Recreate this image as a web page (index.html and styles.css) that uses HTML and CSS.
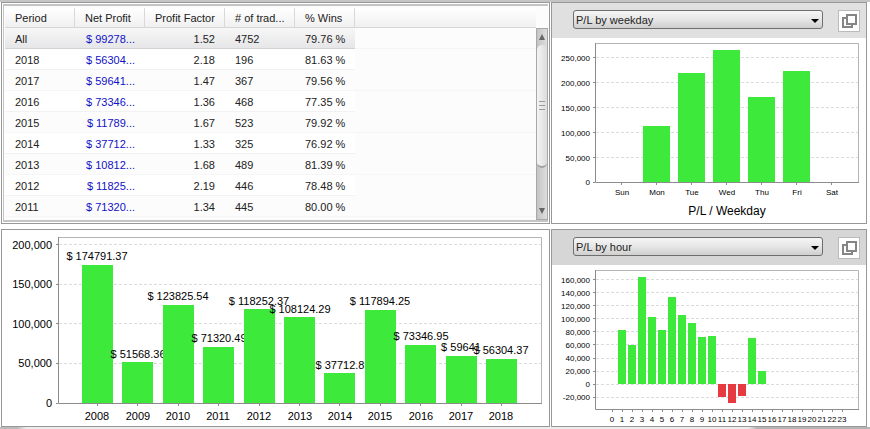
FILE: index.html
```html
<!DOCTYPE html>
<html lang="en">
<head>
    <meta charset="UTF-8">
    <meta name="viewport" content="width=device-width, initial-scale=1.0">
    <title>Strategy statistics</title>
    <link rel="stylesheet" href="styles.css">
</head>
<body>
    <div class="top-strip"></div>
    <main class="dashboard">
        <section class="panel table-panel">
            <div class="table-frame">
                <table class="periods">
                    <colgroup>
                        <col class="col-medium">
                        <col class="col-medium">
                        <col class="col-wide">
                        <col class="col-medium">
                        <col class="col-small">
                        <col>
                    </colgroup>
                    <thead>
                        <tr><th>Period</th><th>Net Profit</th><th>Profit Factor</th><th># of trad...</th><th>% Wins</th><td class="filler"></td></tr>
                    </thead>
                    <tbody>
                        <tr class="selected"><td>All</td><td class="money">$ 99278...</td><td class="num">1.52</td><td>4752</td><td>79.76 %</td><td class="filler"></td></tr>
                        <tr><td>2018</td><td class="money">$ 56304...</td><td class="num">2.18</td><td>196</td><td>81.63 %</td><td class="filler"></td></tr>
                        <tr><td>2017</td><td class="money">$ 59641...</td><td class="num">1.47</td><td>367</td><td>79.56 %</td><td class="filler"></td></tr>
                        <tr><td>2016</td><td class="money">$ 73346...</td><td class="num">1.36</td><td>468</td><td>77.35 %</td><td class="filler"></td></tr>
                        <tr><td>2015</td><td class="money">$ 11789...</td><td class="num">1.67</td><td>523</td><td>79.92 %</td><td class="filler"></td></tr>
                        <tr><td>2014</td><td class="money">$ 37712...</td><td class="num">1.33</td><td>325</td><td>76.92 %</td><td class="filler"></td></tr>
                        <tr><td>2013</td><td class="money">$ 10812...</td><td class="num">1.68</td><td>489</td><td>81.39 %</td><td class="filler"></td></tr>
                        <tr><td>2012</td><td class="money">$ 11825...</td><td class="num">2.19</td><td>446</td><td>78.48 %</td><td class="filler"></td></tr>
                        <tr><td>2011</td><td class="money">$ 71320...</td><td class="num">1.34</td><td>445</td><td>80.00 %</td><td class="filler"></td></tr>
                    </tbody>
                </table>
                <div class="scrollbar">
                    <button type="button" class="scroll-button" aria-label="Scroll up">
                        <svg width="8" height="8" viewBox="0 0 8 8"><path d="M4 1 7 7H1z" fill="#666"/></svg>
                    </button>
                    <div class="scroll-track">
                        <div class="scroll-thumb"><i></i><i></i><i></i></div>
                    </div>
                    <button type="button" class="scroll-button" aria-label="Scroll down">
                        <svg width="8" height="8" viewBox="0 0 8 8"><path d="M1 1H7L4 7z" fill="#666"/></svg>
                    </button>
                </div>
            </div>
        </section>

        <section class="panel">
            <div class="panel-header">
                <div class="select-wrap">
                    <select class="chart-select" aria-label="Weekday chart type">
                        <option>P/L by weekday</option>
                    </select>
                    <svg class="caret" width="8" height="4" viewBox="0 0 8 4"><path d="M0 0H8L4 4z"/></svg>
                </div>
                <button type="button" class="detach-button" aria-label="Open weekday chart in window">
                    <svg width="16" height="16" viewBox="0 0 16 16" fill="#fff" stroke="#858585" stroke-width="2"><path d="M2 5H11V14H2z"/><path d="M6 2H15V11H6z"/></svg>
                </button>
            </div>
            <svg class="chart small-chart" viewBox="0 0 314 185" role="img" aria-label="P/L by weekday">
                <path class="grid" d="M44 19.5H306M44 44.5H306M44 69.5H306M44 94.5H306M44 119.5H306"/>
                <path class="frame" d="M43.5 5.5H306.5V144.5"/>
                <g class="bars">
                    <rect x="91" y="88" width="27" height="56"/>
                    <rect x="126" y="35" width="27" height="109"/>
                    <rect x="161" y="12" width="27" height="132"/>
                    <rect x="196" y="59" width="27" height="85"/>
                    <rect x="231" y="33" width="27" height="111"/>
                </g>
                <path class="axis" d="M43.5 5V144.5H307M41 19.5H43M41 44.5H43M41 69.5H43M41 94.5H43M41 119.5H43M41 144.5H43M69.5 145V147M104.5 145V147M139.5 145V147M174.5 145V147M209.5 145V147M244.5 145V147M279.5 145V147"/>
                <g class="y-labels">
                    <text x="38" y="23">250,000</text>
                    <text x="38" y="48">200,000</text>
                    <text x="38" y="73">150,000</text>
                    <text x="38" y="98">100,000</text>
                    <text x="38" y="123">50,000</text>
                    <text x="38" y="147">0</text>
                </g>
                <g class="x-labels">
                    <text x="70" y="157">Sun</text>
                    <text x="105" y="157">Mon</text>
                    <text x="140" y="157">Tue</text>
                    <text x="175" y="157">Wed</text>
                    <text x="210" y="157">Thu</text>
                    <text x="245" y="157">Fri</text>
                    <text x="280" y="157">Sat</text>
                </g>
                <text class="chart-title" x="175" y="177">P/L / Weekday</text>
            </svg>
        </section>

        <section class="panel">
            <svg class="chart" viewBox="0 0 547 196" role="img" aria-label="Net profit by year">
                <path class="grid" d="M57 14.5H539M57 54.5H539M57 93.5H539M57 133.5H539"/>
                <path class="frame" d="M56.5 7.5H539.5V173.5"/>
                <!-- each label follows its bar, so the next bar can cover it -->
                <g class="bars x-labels">
                    <rect x="80" y="35" width="31" height="138"/><text x="95" y="30">$ 174791.37</text>
                    <rect x="120" y="132" width="31" height="41"/><text x="136" y="128">$ 51568.36</text>
                    <rect x="161" y="75" width="31" height="98"/><text x="176" y="70">$ 123825.54</text>
                    <rect x="201" y="117" width="31" height="56"/><text x="217" y="112">$ 71320.49</text>
                    <rect x="242" y="79" width="31" height="94"/><text x="257" y="75">$ 118252.37</text>
                    <rect x="282" y="87" width="31" height="86"/><text x="298" y="83">$ 108124.29</text>
                    <rect x="322" y="143" width="31" height="30"/><text x="338" y="139">$ 37712.8</text>
                    <rect x="363" y="80" width="31" height="93"/><text x="378" y="75">$ 117894.25</text>
                    <rect x="403" y="115" width="31" height="58"/><text x="419" y="110">$ 73346.95</text>
                    <rect x="444" y="126" width="31" height="47"/><text x="459" y="121">$ 59641</text>
                    <rect x="484" y="129" width="31" height="44"/><text x="499" y="124">$ 56304.37</text>
                </g>
                <path class="axis" d="M56.5 7V173.5H540M54 14.5H56M54 54.5H56M54 93.5H56M54 133.5H56M54 173.5H56M95.5 174V176M135.5 174V176M176.5 174V176M216.5 174V176M257.5 174V176M297.5 174V176M337.5 174V176M378.5 174V176M418.5 174V176M459.5 174V176M499.5 174V176"/>
                <g class="y-labels">
                    <text x="50" y="19">200,000</text>
                    <text x="50" y="58">150,000</text>
                    <text x="50" y="98">100,000</text>
                    <text x="50" y="137">50,000</text>
                    <text x="50" y="177">0</text>
                </g>
                <g class="x-labels">
                    <text x="95" y="190">2008</text>
                    <text x="136" y="190">2009</text>
                    <text x="176" y="190">2010</text>
                    <text x="216" y="190">2011</text>
                    <text x="257" y="190">2012</text>
                    <text x="298" y="190">2013</text>
                    <text x="338" y="190">2014</text>
                    <text x="378" y="190">2015</text>
                    <text x="419" y="190">2016</text>
                    <text x="459" y="190">2017</text>
                    <text x="499" y="190">2018</text>
                </g>
            </svg>
        </section>

        <section class="panel">
            <div class="panel-header darker">
                <div class="select-wrap">
                    <select class="chart-select" aria-label="Hour chart type">
                        <option>P/L by hour</option>
                    </select>
                    <svg class="caret" width="8" height="4" viewBox="0 0 8 4"><path d="M0 0H8L4 4z"/></svg>
                </div>
                <button type="button" class="detach-button" aria-label="Open hour chart in window">
                    <svg width="16" height="16" viewBox="0 0 16 16" fill="#fff" stroke="#858585" stroke-width="2"><path d="M2 5H11V14H2z"/><path d="M6 2H15V11H6z"/></svg>
                </button>
            </div>
            <svg class="chart small-chart" viewBox="0 0 314 161" role="img" aria-label="P/L by hour">
                <path class="grid" d="M44 14.5H306M44 27.5H306M44 40.5H306M44 53.5H306M44 66.5H306M44 79.5H306M44 93.5H306M44 106.5H306M44 119.5H306M44 132.5H306"/>
                <path class="frame" d="M43.5 5.5H306.5V144.5"/>
                <g class="bars">
                    <rect x="66" y="65" width="8" height="54"/>
                    <rect x="76" y="80" width="8" height="39"/>
                    <rect x="86" y="12" width="8" height="107"/>
                    <rect x="96" y="52" width="8" height="67"/>
                    <rect x="106" y="65" width="8" height="54"/>
                    <rect x="116" y="32" width="8" height="87"/>
                    <rect x="126" y="50" width="8" height="69"/>
                    <rect x="136" y="58" width="8" height="61"/>
                    <rect x="146" y="72" width="8" height="47"/>
                    <rect x="156" y="71" width="8" height="48"/>
                    <rect class="loss" x="166" y="119" width="8" height="13"/>
                    <rect class="loss" x="176" y="119" width="8" height="19"/>
                    <rect class="loss" x="186" y="119" width="8" height="12"/>
                    <rect x="196" y="73" width="8" height="46"/>
                    <rect x="206" y="106" width="8" height="13"/>
                </g>
                <path class="axis" d="M43.5 5V144.5H307M41 14.5H43M41 27.5H43M41 40.5H43M41 53.5H43M41 66.5H43M41 79.5H43M41 93.5H43M41 106.5H43M41 119.5H43M41 132.5H43M60.5 145V147M70.5 145V147M80.5 145V147M90.5 145V147M100.5 145V147M110.5 145V147M120.5 145V147M130.5 145V147M140.5 145V147M150.5 145V147M160.5 145V147M170.5 145V147M180.5 145V147M190.5 145V147M200.5 145V147M210.5 145V147M220.5 145V147M230.5 145V147M240.5 145V147M250.5 145V147M260.5 145V147M270.5 145V147M280.5 145V147M290.5 145V147"/>
                <g class="y-labels">
                    <text x="38" y="18">160,000</text>
                    <text x="38" y="31">140,000</text>
                    <text x="38" y="44">120,000</text>
                    <text x="38" y="57">100,000</text>
                    <text x="38" y="70">80,000</text>
                    <text x="38" y="83">60,000</text>
                    <text x="38" y="96">40,000</text>
                    <text x="38" y="109">20,000</text>
                    <text x="38" y="122">0</text>
                    <text x="38" y="135">-20,000</text>
                </g>
                <g class="x-labels">
                    <text x="60" y="157">0</text>
                    <text x="70" y="157">1</text>
                    <text x="80" y="157">2</text>
                    <text x="90" y="157">3</text>
                    <text x="100" y="157">4</text>
                    <text x="110" y="157">5</text>
                    <text x="120" y="157">6</text>
                    <text x="130" y="157">7</text>
                    <text x="140" y="157">8</text>
                    <text x="150" y="157">9</text>
                    <text x="160" y="157">10</text>
                    <text x="170" y="157">11</text>
                    <text x="180" y="157">12</text>
                    <text x="190" y="157">13</text>
                    <text x="200" y="157">14</text>
                    <text x="210" y="157">15</text>
                    <text x="220" y="157">16</text>
                    <text x="230" y="157">17</text>
                    <text x="240" y="157">18</text>
                    <text x="250" y="157">19</text>
                    <text x="260" y="157">20</text>
                    <text x="270" y="157">21</text>
                    <text x="280" y="157">22</text>
                    <text x="290" y="157">23</text>
                </g>
            </svg>
        </section>
    </main>
    <div class="bottom-strip"></div>
</body>
</html>
```
FILE: styles.css
```css
* {
    box-sizing: border-box;
}
body {
    margin: 0;
    background-color: #fff;
    font-family: "Liberation Sans", Arial, sans-serif;
    font-size: 11px;
    color: #222;
}
.top-strip {
    height: 2px;
    background-color: #c4c4c4;
}
.bottom-strip {
    height: 2px;
    background: linear-gradient(to right, #bbb 2%, #ececec 3%, #ececec 86%, #b4b4b4 87%);
}
.dashboard {
    display: grid;
    grid-template-columns: minmax(0, 549fr) minmax(0, 316fr);
    gap: 5px 1px;
    padding: 0 3px 0 1px;
}
.panel {
    border: 1px solid #989898;
    background-color: #fff;
}

/* period table */
.table-panel {
    padding: 1px;
}
.table-frame {
    display: flex;
    height: 100%;
    padding: 2px 0 0 1px;
    border: 1px solid #c4c4c4;
    border-width: 2px 0 2px 1px;
    background-color: #fcfcfc;
}
.periods {
    flex: 1;
    width: 100%;
    align-self: flex-start;
    table-layout: fixed;
    border-collapse: separate;
    border-spacing: 0;
}
.col-small {
    width: 60px;
}
.col-medium {
    width: 70px;
}
.col-wide {
    width: 80px;
}
.periods th,
.periods td {
    height: 21px;
    padding: 1px 10px 0;
    line-height: 19px;
    font-weight: normal;
    text-align: left;
    white-space: nowrap;
    border-bottom: 1px solid #f2f2f2;
}
.periods thead th,
.periods thead td {
    height: 20px;
    line-height: 18px;
    background: linear-gradient(#fff, #f0f0f0);
    border-bottom: 1px solid #d6d6d6;
}
.periods th {
    border-right: 1px solid #d9d9d9;
}
.periods thead th:nth-child(n) {
    padding-right: 0;
}
.periods tbody td {
    padding-top: 2px;
    line-height: 18px;
    background-color: #fff;
}
.periods tbody tr:nth-child(odd) td,
.periods tbody td.filler {
    background-color: #fcfcfc;
    border-bottom-color: #f6f6f6;
}
.periods tbody td.filler {
    border-bottom-color: #fcfcfc;
}
.periods tbody tr.selected td:not(.filler) {
    background: linear-gradient(#f7f7f7, #e6e6e8);
    border-bottom-color: #d2d2d2;
}
.periods .money,
.periods .num {
    text-align: right;
}
.periods .money {
    color: #1010c8;
}

/* scrollbar */
.scrollbar {
    flex: none;
    width: 12px;
    margin-top: 20px;
    display: flex;
    flex-direction: column;
    background: linear-gradient(to right, #c4c4c4, #dedede);
    border: 1px solid #a8a8a8;
}
.scroll-button {
    height: 16px;
    padding: 0;
    border: 0;
    background: none;
    display: flex;
    align-items: center;
    justify-content: center;
}
.scroll-track {
    flex: 1;
}
.scroll-thumb {
    height: 78%;
    border-radius: 5px;
    border-bottom: 2px solid #a0a0a0;
    background: linear-gradient(to right, #f4f4f4, #dcdcdc);
    display: flex;
    flex-direction: column;
    align-items: center;
    justify-content: center;
    gap: 3px;
}
.scroll-thumb i {
    width: 6px;
    height: 1px;
    background-color: #999;
}

/* chart panels */
.panel-header {
    display: flex;
    align-items: flex-start;
    gap: 15px;
    height: 35px;
    padding: 7px 6px 0 21px;
    background-color: #e0e0e0;
}
.panel-header.darker {
    background-color: #d6d6d6;
}
.select-wrap {
    position: relative;
    flex: 1;
    display: flex;
}
.chart-select {
    appearance: none;
    width: 100%;
    height: 19px;
    padding: 0 20px 0 2px;
    border: 1px solid #6e6e6e;
    border-radius: 3px;
    background: linear-gradient(#f6f6f6, #e6e6e6 50%, #cfcfcf);
    font: inherit;
    color: #222;
}
.caret {
    position: absolute;
    right: 4px;
    top: 9px;
    pointer-events: none;
}
.detach-button {
    display: flex;
    align-items: center;
    justify-content: center;
    width: 22px;
    height: 22px;
    padding: 0;
    border: 1px solid #bbb;
    background-color: #fff;
}
.chart {
    display: block;
    width: 100%;
    height: auto;
    font-size: 11px;
    fill: #000;
}
.small-chart {
    font-size: 8px;
}
.chart-title {
    font-size: 12px;
    text-anchor: middle;
}
.x-labels {
    text-anchor: middle;
}
.y-labels {
    text-anchor: end;
}
.grid {
    fill: none;
    stroke: #dcdcdc;
    stroke-dasharray: 3 2;
}
.frame {
    fill: none;
    stroke: #b4b4b4;
}
.axis {
    fill: none;
    stroke: #8c8c8c;
}
.bars rect {
    fill: #3de93a;
}
.bars .loss {
    fill: #e63a40;
}
```
